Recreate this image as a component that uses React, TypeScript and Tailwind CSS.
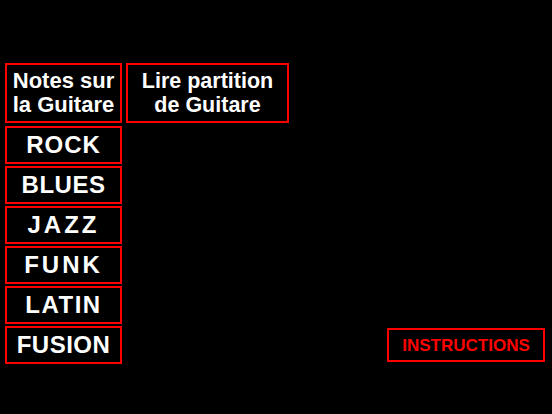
import React from "react";

const genres: { label: string; cls: string }[] = [
  { label: "ROCK", cls: "tracking-[1px]" },
  { label: "BLUES", cls: "tracking-[0.5px]" },
  { label: "JAZZ", cls: "tracking-[3px]" },
  { label: "FUNK", cls: "tracking-[3px]" },
  { label: "LATIN", cls: "tracking-[1.5px]" },
  { label: "FUSION", cls: "tracking-[0.5px]" },
];

export default function App() {
  return (
    <div
      className="w-[552px] h-[414px] bg-black overflow-hidden"
      style={{ fontFamily: '"Liberation Sans", Arial, sans-serif' }}
    >
      <div className="pt-[63px] pl-[5px] pr-[7px] flex flex-col gap-[3px]">
        <div className="flex gap-[4px]">
          <div className="w-[117px] h-[60px] border-2 border-[#ff0000] flex items-center justify-center text-center text-white font-bold text-[22px] leading-[24px]">
            Notes sur
            <br />
            la Guitare
          </div>
          <div className="w-[163px] h-[60px] border-2 border-[#ff0000] flex items-center justify-center text-center text-white font-bold text-[21.5px] leading-[24px]">
            Lire partition
            <br />
            de Guitare
          </div>
        </div>
        <div className="flex flex-col gap-[2px]">
          {genres.map((g, i) => (
            <div key={g.label} className="flex items-center">
              <div
                className={`w-[117px] h-[38px] border-2 border-[#ff0000] flex items-center justify-center text-white font-bold text-[24px] leading-none ${g.cls}`}
              >
                {g.label}
              </div>
              {i === genres.length - 1 && (
                <div className="ml-auto w-[158px] h-[34px] border-2 border-[#ff0000] flex items-center justify-center text-[#ff0000] font-bold text-[17px] leading-none">
                  INSTRUCTIONS
                </div>
              )}
            </div>
          ))}
        </div>
      </div>
    </div>
  );
}
